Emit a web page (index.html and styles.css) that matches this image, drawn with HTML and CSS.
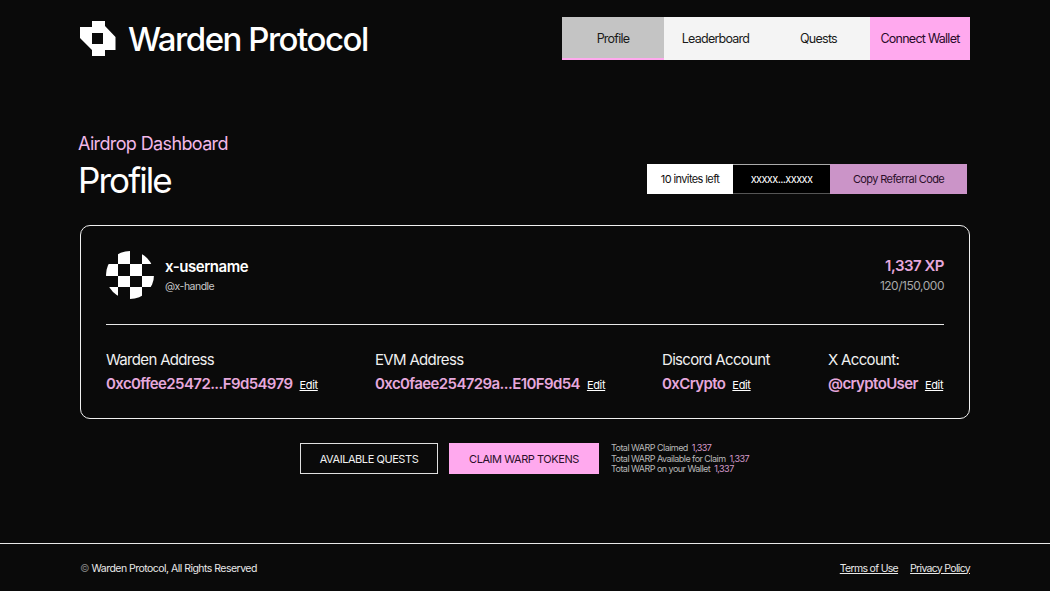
FILE: index.html
```html
<!DOCTYPE html>
<html lang="en">
<head>
    <meta charset="UTF-8">
    <meta name="viewport" content="width=device-width, initial-scale=1.0">
    <title>Warden Protocol - Profile</title>
    <link rel="stylesheet" href="styles.css">
</head>
<body>
    <header class="topbar">
        <div class="brand">
            <svg class="brand-mark" width="36" height="35" viewBox="0 0 36 35">
                <path fill="#fff" fill-rule="evenodd" d="M12 0H25V5L35.500 16V29H25V35H12V29L0 17V6H12ZM12 12V23H23V12Z"/>
            </svg>
            <span class="brand-name">Warden Protocol</span>
        </div>
        <nav class="nav">
            <a class="nav-item nav-active">Profile</a>
            <a class="nav-item nav-plain">Leaderboard</a>
            <a class="nav-item nav-plain">Quests</a>
            <a class="nav-item nav-wallet">Connect Wallet</a>
        </nav>
    </header>

    <section class="page-head">
        <div>
            <div class="eyebrow">Airdrop Dashboard</div>
            <h1 class="page-title">Profile</h1>
        </div>
        <div class="referral">
            <span class="ref-invites">10 invites left</span>
            <span class="ref-code">xxxxx...xxxxx</span>
            <span class="ref-copy">Copy Referral Code</span>
        </div>
    </section>

    <section class="card">
        <div class="card-top">
            <div class="user">
                <svg class="avatar" width="48" height="48" viewBox="0 0 48 48">
                    <defs><clipPath id="avatarClip"><circle cx="24" cy="24" r="24"/></clipPath></defs>
                    <g clip-path="url(#avatarClip)" fill="#fff">
                        <rect x="12" y="0" width="12" height="13"/>
                        <rect x="36" y="0" width="12" height="13"/>
                        <rect x="0" y="13" width="12" height="12"/>
                        <rect x="24" y="13" width="12" height="12"/>
                        <rect x="12" y="25" width="12" height="11"/>
                        <rect x="36" y="25" width="12" height="11"/>
                        <rect x="0" y="36" width="12" height="12"/>
                        <rect x="24" y="36" width="12" height="12"/>
                    </g>
                </svg>
                <div>
                    <div class="user-name">x-username</div>
                    <div class="user-handle">@x-handle</div>
                </div>
            </div>
            <div class="xp">
                <div class="xp-value">1,337 XP</div>
                <div class="xp-total">120/150,000</div>
            </div>
        </div>
        <div class="addresses">
            <div class="address addr-warden">
                <div class="addr-label">Warden Address</div>
                <div class="addr-row"><span class="addr-value">0xc0ffee25472...F9d54979</span><a class="addr-edit">Edit</a></div>
            </div>
            <div class="address addr-evm">
                <div class="addr-label">EVM Address</div>
                <div class="addr-row"><span class="addr-value">0xc0faee254729a...E10F9d54</span><a class="addr-edit">Edit</a></div>
            </div>
            <div class="address addr-discord">
                <div class="addr-label">Discord Account</div>
                <div class="addr-row"><span class="addr-value">0xCrypto</span><a class="addr-edit">Edit</a></div>
            </div>
            <div class="address">
                <div class="addr-label">X Account:</div>
                <div class="addr-row"><span class="addr-value">@cryptoUser</span><a class="addr-edit">Edit</a></div>
            </div>
        </div>
    </section>

    <section class="actions">
        <button class="btn btn-outline">AVAILABLE QUESTS</button>
        <button class="btn btn-pink">CLAIM WARP TOKENS</button>
        <div class="totals">
            <div>Total WARP Claimed <span class="total-num">1,337</span></div>
            <div>Total WARP Available for Claim <span class="total-num">1,337</span></div>
            <div>Total WARP on your Wallet <span class="total-num">1,337</span></div>
        </div>
    </section>

    <footer class="footer">
        <div class="copyright"><span class="copy-mark">©</span> Warden Protocol, All Rights Reserved</div>
        <div class="footer-links">
            <a>Terms of Use</a>
            <a>Privacy Policy</a>
        </div>
    </footer>
</body>
</html>
```

FILE: styles.css
```css
html, body {
    margin: 0;
    padding: 0;
    height: 591px;
    overflow: hidden;
}

body {
    background-color: #0a0a0a;
    color: #fff;
    font-family: "Inter", "Liberation Sans", sans-serif;
    font-weight: 400;
    letter-spacing: -0.03em;
}

/* top bar */
.topbar {
    display: flex;
    justify-content: space-between;
    align-items: flex-start;
    padding: 17px 80px 0;
    height: 60px;
    box-sizing: content-box;
}

.brand {
    display: flex;
    align-items: flex-start;
    gap: 12px;
    margin-top: 4px;
}

.brand-name {
    font-size: 33px;
    line-height: 35px;
    font-weight: 500;
    letter-spacing: -0.045em;
    padding-top: 1px;
}

.nav {
    display: flex;
    height: 43px;
    width: 408px;
    font-size: 12.500px;
    letter-spacing: -0.06em;
    color: #1a1a1a;
}

.nav-item {
    display: flex;
    align-items: center;
    justify-content: center;
    box-sizing: border-box;
    padding-top: 2px;
    border-bottom: 2px solid #f4f4f4;
}

.nav-active {
    width: 102px;
    background: #c4c4c4;
    border-bottom-color: #ffa9ee;
}

.nav-plain {
    width: 103px;
    background: #f4f4f4;
}

.nav-wallet {
    width: 100px;
    background: #ffa9ee;
    border-bottom-color: #ffa9ee;
    color: #2a0a2a;
}

/* heading row */
.page-head {
    display: flex;
    justify-content: space-between;
    align-items: flex-start;
    margin: 56px 83px 0 78px;
    height: 71px;
}

.eyebrow {
    font-size: 18px;
    line-height: 22px;
    letter-spacing: -0.035em;
    color: #f2b8e8;
}

.page-title {
    margin: 3px 0 0;
    font-size: 35px;
    line-height: 44px;
    font-weight: 400;
    letter-spacing: -0.055em;
    color: #fff;
}

.referral {
    display: flex;
    height: 30px;
    margin-top: 31px;
    font-size: 11px;
    letter-spacing: -0.055em;
}

.referral span {
    display: flex;
    align-items: center;
    justify-content: center;
    box-sizing: border-box;
}

.ref-invites {
    width: 86px;
    background: #fff;
    color: #111;
}

.ref-code {
    width: 97px;
    background: #000;
    color: #fff;
    border-top: 1px solid #aaa;
    border-bottom: 1px solid #555;
}

.ref-copy {
    width: 137px;
    background: #cb94c8;
    color: #2a0f2a;
}

/* profile card */
.card {
    margin: 21px 80px 0;
    height: 194px;
    box-sizing: border-box;
    border: 1px solid #f0f0f0;
    border-radius: 10px;
    padding: 0 25px;
}

.card-top {
    display: flex;
    justify-content: space-between;
    height: 99px;
    padding-top: 25px;
    box-sizing: border-box;
    border-bottom: 1px solid #e8e8e8;
}

.user {
    display: flex;
    gap: 11px;
    align-items: flex-start;
}

.user-name {
    font-size: 15px;
    line-height: 18px;
    font-weight: 600;
    margin-top: 7px;
    letter-spacing: -0.03em;
}

.user-handle {
    font-size: 10.500px;
    line-height: 14px;
    margin-top: 4px;
    letter-spacing: -0.05em;
    color: #c8c8c8;
}

.xp {
    text-align: right;
    margin-top: 6px;
}

.xp-value {
    font-size: 15px;
    line-height: 18px;
    font-weight: 600;
    color: #e6a8dc;
}

.xp-total {
    font-size: 12px;
    line-height: 14px;
    margin-top: 4px;
    letter-spacing: -0.04em;
    color: #a8a8a8;
}

.addresses {
    display: flex;
    padding-top: 25px;
}

.addr-warden {
    width: 269px;
}

.addr-evm {
    width: 287px;
}

.addr-discord {
    width: 166px;
}

.addr-label {
    font-size: 15px;
    line-height: 20px;
    letter-spacing: -0.045em;
    color: #f0f0f0;
}

.addr-row {
    display: flex;
    align-items: baseline;
    gap: 7px;
    margin-top: 4px;
}

.addr-value {
    font-size: 15px;
    line-height: 20px;
    font-weight: 600;
    color: #e6a8dc;
    letter-spacing: -0.04em;
}

.addr-edit {
    font-size: 11px;
    letter-spacing: -0.03em;
    color: #fff;
    text-decoration: underline;
}

/* buttons below the card */
.actions {
    display: flex;
    align-items: center;
    margin: 24px 0 0 300px;
    height: 31px;
}

.btn {
    height: 31px;
    box-sizing: border-box;
    font-family: inherit;
    font-size: 11px;
    letter-spacing: -0.04em;
    padding: 0;
}

.btn-outline {
    width: 138px;
    background: transparent;
    color: #f0f0f0;
    border: 1px solid #e0e0e0;
}

.btn-pink {
    width: 150px;
    margin-left: 11px;
    background: #ffa9ee;
    color: #2a0f2a;
    border: none;
}

.totals {
    margin: 1px 0 0 12px;
    font-size: 9px;
    line-height: 10.500px;
    letter-spacing: -0.06em;
    color: #b8b8b8;
}

.total-num {
    margin-left: 2px;
    color: #d69ccc;
}

/* footer */
.footer {
    display: flex;
    justify-content: space-between;
    align-items: center;
    margin-top: 69px;
    height: 48px;
    padding: 0 80px;
    border-top: 1px solid #e8e8e8;
    font-size: 10.500px;
    letter-spacing: -0.05em;
    color: #e8e8e8;
}

.copy-mark {
    color: #777;
}

.footer-links {
    display: flex;
    gap: 12px;
    letter-spacing: -0.065em;
}

.footer-links a {
    text-decoration: underline;
}
```
